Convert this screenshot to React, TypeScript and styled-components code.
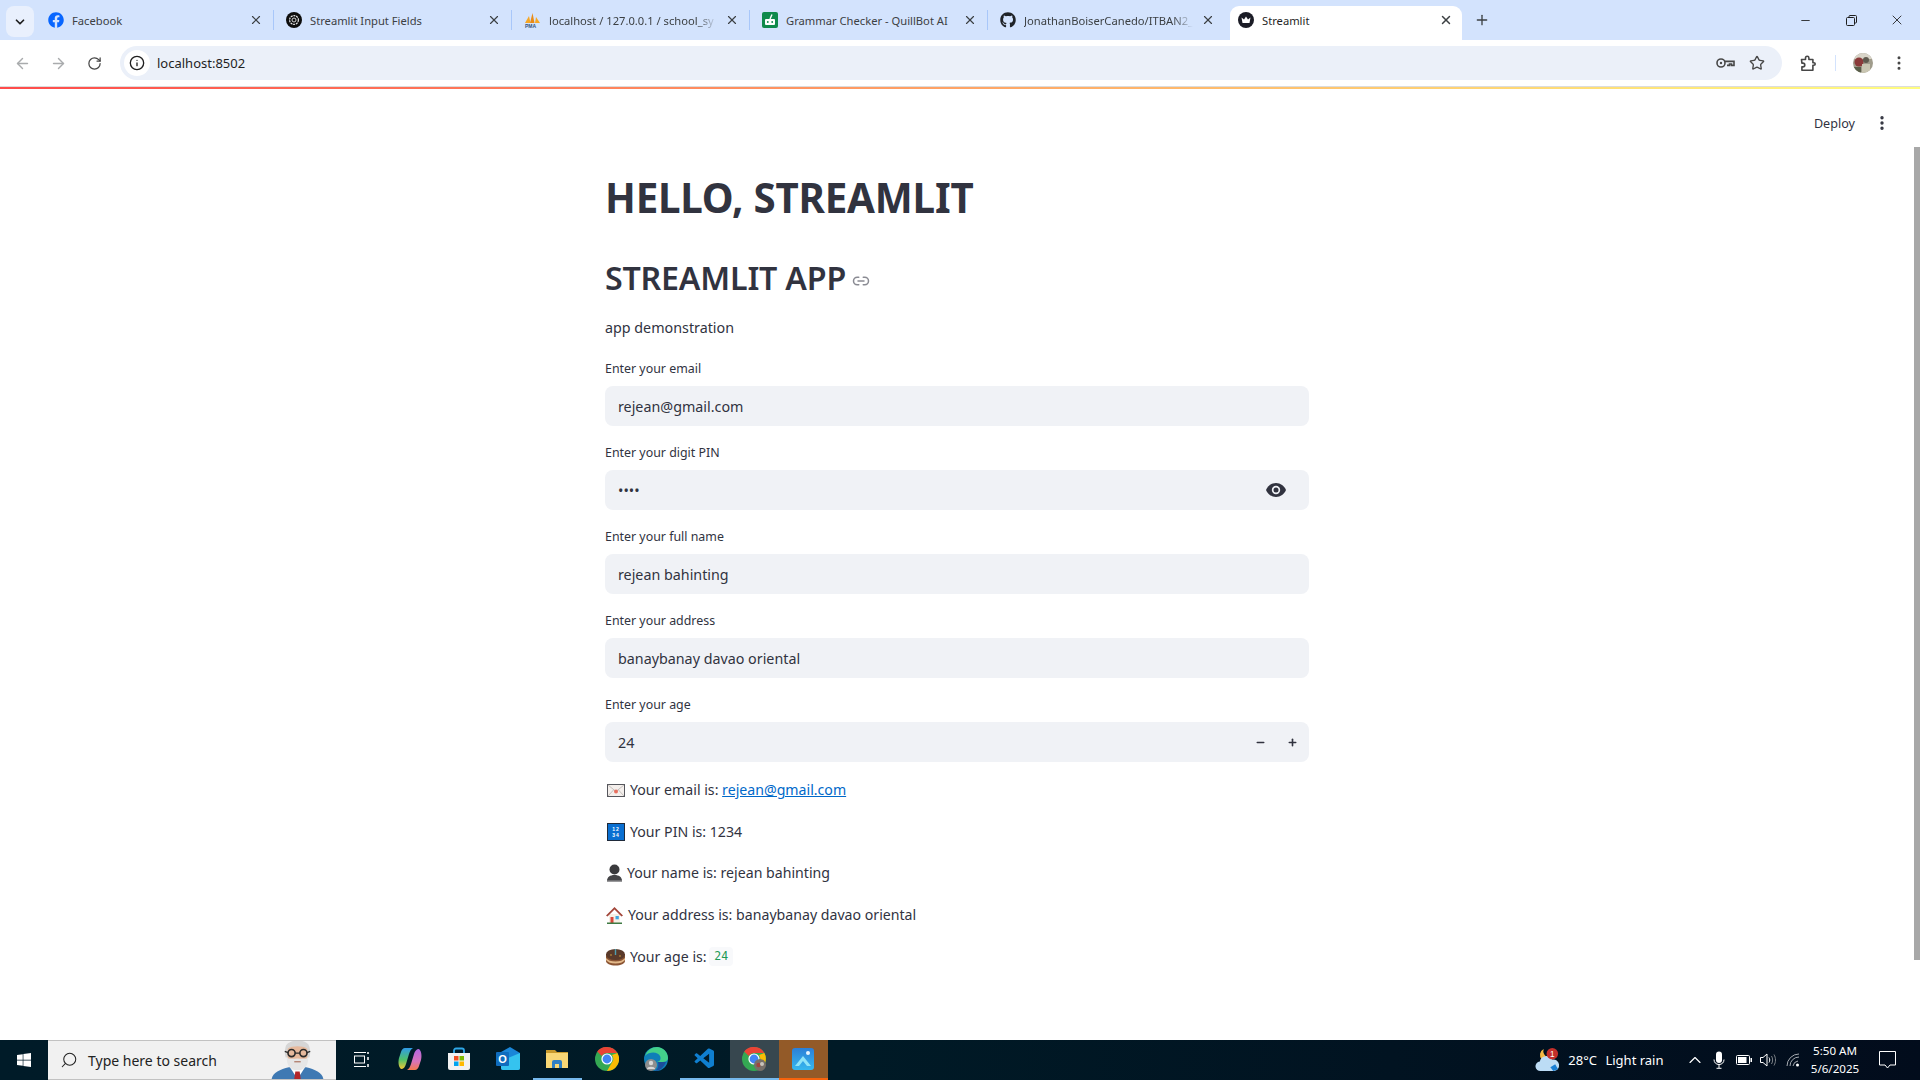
import styled, { createGlobalStyle } from 'styled-components';
import {
  ArrowLeft,
  ArrowRight,
  ChevronDown,
  ChevronUp,
  EllipsisVertical,
  Info,
  Link2,
  Minus,
  Plus,
  RotateCw,
  Search,
  Star,
  X,
} from 'lucide-react';
import { FaFacebook, FaGithub, FaWindows } from 'react-icons/fa';
import { VscVscode } from 'react-icons/vsc';

const UI_FONT = '"Noto Sans", "Open Sans", sans-serif';

const GlobalStyle = createGlobalStyle`
  html, body {
    margin: 0;
    padding: 0;
    height: 100%;
    overflow: hidden;
    background: #ffffff;
    font-family: ${UI_FONT};
  }
  * { box-sizing: border-box; }
`;

const Page = styled.div`
  width: 1920px;
  height: 1080px;
  display: flex;
  flex-direction: column;
  overflow: hidden;
`;

/* ---- browser tabs ---- */

const TabStrip = styled.div`
  height: 40px;
  flex: none;
  display: flex;
  align-items: flex-end;
  padding-left: 6px;
  background: #d3e3fd;
`;

const TabMenu = styled.div`
  width: 28px;
  height: 31px;
  margin: 6px 2px 0 0;
  align-self: flex-start;
  border-radius: 8px;
  display: flex;
  align-items: center;
  justify-content: center;
  background: #e9f0fd;
  color: #1f1f1f;
`;

const Tab = styled.div<{ $active?: boolean; $noSep?: boolean }>`
  position: relative;
  width: 238px;
  height: 40px;
  padding: 0 11px 0 12px;
  display: flex;
  align-items: center;
  gap: 8px;
  font-size: 11.2px;
  color: ${(p) => (p.$active ? '#1f1f1f' : '#3c4043')};

  &::before {
    content: '';
    display: ${(p) => (p.$active ? 'block' : 'none')};
    position: absolute;
    left: 4px;
    right: 2px;
    top: 6px;
    bottom: 0;
    background: #ffffff;
    border-radius: 9px 9px 0 0;
  }

  &::after {
    content: '';
    display: ${(p) => (p.$active || p.$noSep ? 'none' : 'block')};
    position: absolute;
    right: 0;
    top: 10px;
    height: 20px;
    width: 1px;
    background: #a8c7fa;
  }

  > * {
    position: relative;
  }
`;

const TabTitle = styled.span<{ $fade?: boolean }>`
  flex: 1;
  min-width: 0;
  white-space: nowrap;
  overflow: hidden;
  ${(p) =>
    p.$fade
      ? 'mask-image: linear-gradient(to right, #000 88%, transparent 100%);'
      : ''}
`;

const TabClose = styled.span`
  width: 14px;
  flex: none;
  display: flex;
  justify-content: center;
  color: #3c4043;
`;

const NewTab = styled.div`
  width: 36px;
  height: 40px;
  display: flex;
  align-items: center;
  justify-content: center;
  color: #3c4043;
`;

const WindowButtons = styled.div`
  margin-left: auto;
  height: 40px;
  display: flex;
  align-items: center;
  color: #1f1f1f;
`;

const WindowButton = styled.div`
  width: 46px;
  height: 40px;
  display: flex;
  align-items: center;
  justify-content: center;
`;

/* ---- browser toolbar ---- */

const Toolbar = styled.div`
  height: 47px;
  flex: none;
  padding: 6px 10px 6px 4px;
  display: flex;
  align-items: flex-start;
  background: #ffffff;
  border-bottom: 1px solid #dcdcdc;
`;

const NavButton = styled.div<{ $dim?: boolean }>`
  width: 36px;
  height: 34px;
  display: flex;
  align-items: center;
  justify-content: center;
  color: ${(p) => (p.$dim ? '#a9abad' : '#474747')};
`;

const UrlBar = styled.div`
  width: 1662px;
  height: 34px;
  margin-left: 8px;
  padding: 0 17px 0 4px;
  border-radius: 17px;
  display: flex;
  align-items: center;
  background: #ebf0f9;
  font-size: 13px;
  color: #1f1f1f;
`;

const InfoBadge = styled.div`
  width: 26px;
  height: 26px;
  margin-right: 7px;
  border-radius: 50%;
  display: flex;
  align-items: center;
  justify-content: center;
  background: #ffffff;
  color: #1f1f1f;
`;

const UrlActions = styled.div`
  margin-left: auto;
  display: flex;
  align-items: center;
  gap: 14px;
  color: #474747;
`;

const ToolbarRight = styled.div`
  flex: 1;
  height: 34px;
  display: flex;
  align-items: center;
  padding-left: 18px;
  color: #474747;
`;

const ToolbarSep = styled.div`
  width: 1px;
  height: 16px;
  margin: 0 17px 0 18px;
  background: #d3e3fd;
`;

const ToolbarMenu = styled.span`
  margin-left: 17px;
  display: flex;
`;

/* ---- streamlit page ---- */

const Decoration = styled.div`
  height: 2px;
  flex: none;
  background: linear-gradient(to right, #ff4b4b, #fffd80);
`;

const Body = styled.div`
  flex: 1;
  min-height: 0;
  display: flex;
  background: #ffffff;
`;

const Main = styled.main`
  flex: 1;
  min-width: 0;
  display: flex;
  flex-direction: column;
`;

const Scrollbar = styled.div`
  width: 8px;
  padding: 58px 0 0 2px;
`;

const ScrollThumb = styled.div`
  height: 813px;
  background: #a8a8a8;
`;

const StreamlitHeader = styled.header`
  height: 68px;
  flex: none;
  padding-right: 21px;
  display: flex;
  align-items: center;
  justify-content: flex-end;
  gap: 18px;
  font-size: 12.6px;
  color: #31333f;
`;

const Content = styled.div`
  width: 704px;
  margin-left: 605px;
  padding-top: 16px;
  color: #31333f;
`;

const Title = styled.h1`
  margin: 0;
  height: 56px;
  font-size: 40.3px;
  font-weight: 700;
  line-height: 50px;
  letter-spacing: -0.2px;
`;

const Subtitle = styled.h2`
  margin: 27px 0 0;
  height: 44px;
  display: flex;
  align-items: center;
  gap: 6px;
  font-size: 32.2px;
  font-weight: 600;
  line-height: 44px;
  letter-spacing: -0.2px;
`;

const LinkIcon = styled.span`
  display: flex;
  margin-top: 6px;
  color: #8a8b93;
`;

const Intro = styled.p`
  margin: 16px 0 0;
  height: 24px;
  font-size: 14.3px;
  line-height: 24px;
`;

const FieldList = styled.div`
  margin-top: 18px;
  display: flex;
  flex-direction: column;
  gap: 16px;
`;

const Field = styled.div`
  display: flex;
  flex-direction: column;
`;

const FieldLabel = styled.label`
  height: 28px;
  font-size: 12.4px;
  line-height: 22px;
`;

const InputBox = styled.div`
  height: 40px;
  padding: 0 13px;
  border-radius: 8px;
  display: flex;
  align-items: center;
  background: #f0f2f6;
  font-size: 14.3px;
  color: #31333f;
`;

const InputValue = styled.span`
  flex: 1;
`;

const EyeButton = styled.span`
  margin-right: 10px;
  display: flex;
`;

const Stepper = styled.span`
  display: flex;
  align-items: center;
  gap: 21px;
  margin-right: -2px;
  color: #31333f;
`;

const Results = styled.div`
  margin-top: 16px;
  display: flex;
  flex-direction: column;
  gap: 17.7px;
`;

const ResultLine = styled.p`
  margin: 0;
  height: 24px;
  display: flex;
  align-items: center;
  gap: 5px;
  font-size: 14.15px;
  line-height: 24px;
`;

const Emoji = styled.span<{ $left: number }>`
  display: flex;
  margin-left: ${(p) => p.$left}px;
`;

const LineText = styled.span`
  display: inline-flex;
  align-items: center;
  white-space: pre;
`;

const Mail = styled.a`
  color: #0068c9;
  text-decoration: underline;
`;

const CodeBadge = styled.code`
  margin-left: -1px;
  padding: 1px 5px;
  border-radius: 4px;
  background: #f8f9fb;
  font-family: "DejaVu Sans Mono", monospace;
  font-size: 11.5px;
  line-height: 17px;
  color: #1c9a56;
`;

/* ---- windows taskbar ---- */

const Taskbar = styled.footer`
  height: 40px;
  flex: none;
  display: flex;
  align-items: stretch;
  background: linear-gradient(to right, #001b28, #001a26 45%, #020c1c);
  color: #ffffff;
`;

const StartButton = styled.div`
  width: 48px;
  display: flex;
  align-items: center;
  justify-content: center;
`;

const SearchBox = styled.div`
  position: relative;
  width: 288px;
  padding-left: 12px;
  display: flex;
  align-items: center;
  gap: 10px;
  overflow: hidden;
  background: #f1f1f1;
  border-top: 1px solid #c2c2c2;
  border-bottom: 1px solid #c2c2c2;
  font-size: 14px;
  color: #222222;
`;

const SearchGlass = styled(Search)`
  transform: scaleX(-1);
`;

const SearchMan = styled.span`
  position: absolute;
  right: 10px;
  bottom: 0;
  display: flex;
`;

const TaskSlot = styled.div<{ $state?: 'open' | 'active' | 'alert' }>`
  width: 49.2px;
  display: flex;
  align-items: center;
  justify-content: center;
  border-bottom: 2px solid
    ${(p) =>
      p.$state === 'alert' ? '#f7630c' : p.$state ? '#76b9ed' : 'transparent'};
  background: ${(p) =>
    p.$state === 'active' ? '#37474f' : p.$state === 'alert' ? '#935a28' : 'transparent'};
`;

const Tray = styled.div`
  margin-left: auto;
  padding-right: 11px;
  display: flex;
  align-items: center;
  font-size: 13px;
`;

const WeatherText = styled.span`
  margin-left: 8.5px;
  font-size: 13px;
`;

const TrayIcons = styled.div`
  margin-left: 19px;
  display: flex;
  align-items: center;
`;

const TraySlot = styled.span`
  width: 24.5px;
  display: flex;
  justify-content: center;
`;

const Clock = styled.div`
  width: 60px;
  display: flex;
  flex-direction: column;
  align-items: center;
  font-size: 11.6px;
  line-height: 18px;
`;

const Notify = styled.div`
  width: 44px;
  display: flex;
  align-items: center;
  justify-content: center;
`;

/* ---- drawings ---- */

const ChromeLogo = ({ size = 24 }: { size?: number }) => (
  <svg width={size} height={size} viewBox="0 0 24 24">
    <circle cx="12" cy="12" r="12" fill="#34a853" />
    <path d="M12 0a12 12 0 0 1 10.4 6H12a6 6 0 0 0-5.2 3L2.2 4.4A12 12 0 0 1 12 0z" fill="#ea4335" />
    <path d="M22.4 6A12 12 0 0 1 12 24l5.2-9A6 6 0 0 0 16.9 8z" fill="#fbbc04" />
    <circle cx="12" cy="12" r="5.6" fill="#ffffff" />
    <circle cx="12" cy="12" r="4.4" fill="#4285f4" />
  </svg>
);

const ProfilePhoto = () => (
  <svg width="20" height="20" viewBox="0 0 20 20">
    <clipPath id="avatar-clip">
      <circle cx="10" cy="10" r="10" />
    </clipPath>
    <g clipPath="url(#avatar-clip)">
      <rect width="20" height="20" fill="#a09c8c" />
      <rect width="20" height="6" fill="#d8d4c8" />
      <circle cx="6" cy="9" r="4.500" fill="#8b3a3a" />
      <circle cx="13" cy="7" r="3" fill="#5e5a4e" />
      <rect x="9" y="11" width="8" height="9" fill="#c9c6b2" />
      <rect x="1" y="14" width="7" height="6" fill="#5a5f4a" />
    </g>
  </svg>
);

const StreamlitFavicon = () => (
  <svg width="16" height="16" viewBox="0 0 16 16">
    <circle cx="8" cy="8" r="8" fill="#1b1c26" />
    <path d="M3.5 5.5 6 7.5 8 4.5l2 3 2.5-2-1 5.5h-7z" fill="#ffffff" />
  </svg>
);

const OpenAiFavicon = () => (
  <svg width="16" height="16" viewBox="0 0 16 16">
    <circle cx="8" cy="8" r="8" fill="#0d0d0d" />
    <circle cx="8" cy="8" r="4.4" fill="none" stroke="#e8e8e8" strokeWidth="1.2" strokeDasharray="2 0.8" />
    <circle cx="8" cy="8" r="2" fill="none" stroke="#e8e8e8" strokeWidth="0.9" />
  </svg>
);

const PmaFavicon = () => (
  <svg width="17" height="16" viewBox="0 0 17 16">
    <path d="M1 11 5 4l1.5 7z" fill="#f6a623" />
    <path d="M6 11 8.5 1l2 10z" fill="#e98b16" />
    <path d="M11 11 12 5l4 6z" fill="#f6a623" />
    <text x="1" y="15.5" fontFamily="Liberation Sans" fontSize="5" fontWeight="700" fill="#33557f">PMA</text>
  </svg>
);

const QuillFavicon = () => (
  <svg width="16" height="16" viewBox="0 0 16 16">
    <rect width="16" height="16" rx="2" fill="#0f8a4c" />
    <rect x="3" y="7" width="10" height="6" rx="1" fill="#ffffff" />
    <path d="M8 7 10 2.5" stroke="#ffffff" strokeWidth="1.4" />
    <circle cx="5.8" cy="10" r="0.9" fill="#0f8a4c" />
    <circle cx="10.2" cy="10" r="0.9" fill="#0f8a4c" />
  </svg>
);

const KeyIcon = () => (
  <svg width="19" height="12" viewBox="0 0 19 12" fill="none" stroke="#474747" strokeWidth="1.6">
    <circle cx="5" cy="6" r="4" />
    <circle cx="5" cy="6" r="1.2" fill="#474747" stroke="none" />
    <path d="M9 4.4h9v4h-2.5V7h-2v1.4H11" />
  </svg>
);

const PuzzleIcon = () => (
  <svg width="17" height="17" viewBox="0 0 17 17" fill="none" stroke="#474747" strokeWidth="1.6">
    <path d="M1.5 4.5h4V3a1.7 1.7 0 0 1 3.4 0v1.5h4v3.2h1a1.3 1.3 0 0 1 0 2.6h-1v5h-11v-3.4h1a1.9 1.9 0 0 0 0-3.8h-1z" strokeLinejoin="round" />
  </svg>
);

const RestoreIcon = () => (
  <svg width="11" height="11" viewBox="0 0 11 11" fill="none" stroke="#1f1f1f">
    <rect x="0.5" y="2.5" width="8" height="8" rx="1" />
    <path d="M3 2.5V1.5a1 1 0 0 1 1-1h5.5a1 1 0 0 1 1 1V7a1 1 0 0 1-1 1h-1" />
  </svg>
);

const EyeIcon = () => (
  <svg width="20" height="14" viewBox="0 0 20 14">
    <path d="M10 0C5.500 0 1.700 2.900 0 7c1.700 4.100 5.500 7 10 7s8.300-2.900 10-7c-1.700-4.100-5.500-7-10-7z" fill="#31333f" />
    <circle cx="10" cy="7" r="4.200" fill="#f0f2f6" />
    <circle cx="10" cy="7" r="2.500" fill="#31333f" />
  </svg>
);

const EnvelopeEmoji = () => (
  <svg width="18" height="13" viewBox="0 0 18 13">
    <rect x="0.500" y="0.500" width="17" height="12" fill="#f4efec" stroke="#55565c" />
    <path d="M1 1l8 6.500L17 1M1 12l5.500-6M17 12l-5.500-6" fill="none" stroke="#c4c0bd" />
    <circle cx="9" cy="7.500" r="2" fill="#e8705f" />
  </svg>
);

const KeypadEmoji = () => (
  <svg width="18" height="18" viewBox="0 0 18 18">
    <rect x="0.500" y="0.500" width="17" height="17" fill="#0a6fd1" stroke="#1f2a3a" />
    <text x="9" y="8" textAnchor="middle" fontFamily="Liberation Sans" fontSize="5" fontWeight="700" fill="#ffffff" letterSpacing="1">12</text>
    <text x="9" y="14" textAnchor="middle" fontFamily="Liberation Sans" fontSize="5" fontWeight="700" fill="#ffffff" letterSpacing="1">34</text>
  </svg>
);

const BustEmoji = () => (
  <svg width="15" height="18" viewBox="0 0 15 18">
    <circle cx="7.500" cy="5.500" r="5" fill="#3a3a3d" />
    <path d="M0 17c0-4 3-6 7.500-6s7.500 2 7.500 6z" fill="#454548" />
    <rect y="16.500" width="15" height="1.500" fill="#9a9a9c" />
  </svg>
);

const HouseEmoji = () => (
  <svg width="17" height="18" viewBox="0 0 17 18">
    <path d="M3 8h11v9H3z" fill="#f6efe4" />
    <path d="M0 9.500 8.500 1 17 9.500 15.500 10.500 8.500 3.500 1.500 10.500z" fill="#a2463a" />
    <rect x="4.500" y="11" width="3" height="6" fill="#d8463a" />
    <rect x="9.500" y="10" width="3.300" height="3.300" fill="#3fa7e0" />
    <rect x="1" y="16.500" width="15" height="1.500" fill="#3e7a43" />
  </svg>
);

const CakeEmoji = () => (
  <svg width="19" height="18" viewBox="0 0 19 18">
    <path d="M0 6h19v7c0 2.500-4.200 4.500-9.500 4.500S0 15.500 0 13z" fill="#8a5433" />
    <path d="M0 10c2 2.500 5 3.500 9.500 3.500S17 12.500 19 10v2c-2 2.500-5 3.500-9.500 3.500S2 14.500 0 12z" fill="#e3b98a" />
    <ellipse cx="9.500" cy="6.500" rx="9.500" ry="5.500" fill="#5a3a2a" />
    <rect x="8.800" y="1" width="1.400" height="6" fill="#4f9fb0" />
    <circle cx="5" cy="7" r="0.800" fill="#d9a441" />
    <circle cx="14" cy="8" r="0.800" fill="#d9a441" />
  </svg>
);

const SearchManIcon = () => (
  <svg width="57" height="41" viewBox="0 0 52 38">
    <path d="M2 38c1-6 8-9 16-11h16c8 2 15 5 16 11z" fill="#3f79b3" />
    <path d="M19 27l7 11 7-11z" fill="#ffffff" />
    <path d="M24 31h4l1 7h-6z" fill="#b3262a" />
    <path d="M15 8c2-7 20-8 22 0 1 4 1 7 0 10H15c-1-3-1-6 0-10z" fill="#d6d6d6" />
    <path d="M17 10c4-3 14-3 18 0 1 6 0 12-3 15H20c-3-3-4-9-3-15z" fill="#e6b99c" />
    <path d="M16 18c2 2 6 1 10 1s8 1 10-1c0 7-3 12-10 12s-10-5-10-12z" fill="#e6e6e6" />
    <path d="M23 22h6" stroke="#b07c6a" strokeWidth="1.200" />
    <circle cx="20.500" cy="14" r="3.300" fill="none" stroke="#2a2a2a" strokeWidth="1.500" />
    <circle cx="31.500" cy="14" r="3.300" fill="none" stroke="#2a2a2a" strokeWidth="1.500" />
    <path d="M23.800 14h4.400M17.200 13.500l-3-1M34.800 13.500l3-1" stroke="#2a2a2a" strokeWidth="1.200" />
  </svg>
);

const TaskViewIcon = () => (
  <svg width="16" height="17" viewBox="0 0 16 17" fill="none" stroke="#ffffff">
    <path d="M1 1.500h12M1 15.500h12" />
    <rect x="1.500" y="5" width="10" height="7" />
    <path d="M15 1v2M15 6v3M15 13v3" strokeWidth="1.500" />
  </svg>
);

const CopilotIcon = () => (
  <svg width="24" height="24" viewBox="0 0 24 24">
    <defs>
      <linearGradient id="copilot-a" x1="0" y1="0" x2="0" y2="1">
        <stop offset="0" stopColor="#2f9be8" />
        <stop offset="0.550" stopColor="#4fc06a" />
        <stop offset="1" stopColor="#f3c534" />
      </linearGradient>
      <linearGradient id="copilot-b" x1="0" y1="0" x2="0" y2="1">
        <stop offset="0" stopColor="#b266e0" />
        <stop offset="0.600" stopColor="#d874b8" />
        <stop offset="1" stopColor="#f47a4d" />
      </linearGradient>
    </defs>
    <path d="M7 1h8c-2 1-3 3-4 6l-3 10c-.8 3-2.500 5-5 5C.5 20 0 15 1 11l2-6c.6-2 2-4 4-4z" fill="url(#copilot-a)" />
    <path d="M17 23H9c2-1 3-3 4-6l3-10c.8-3 2.500-5 5-5 2.500 2 3 7 2 11l-2 6c-.6 2-2 4-4 4z" fill="url(#copilot-b)" />
  </svg>
);

const StoreIcon = () => (
  <svg width="24" height="24" viewBox="0 0 24 24">
    <path d="M7 6V3.500A2 2 0 0 1 9 1.500h6a2 2 0 0 1 2 2V6" fill="none" stroke="#2ea8e8" strokeWidth="1.800" />
    <path d="M1 6h22v15a2 2 0 0 1-2 2H3a2 2 0 0 1-2-2z" fill="#f2f2f2" />
    <rect x="7" y="9" width="4.500" height="4.500" fill="#f25022" />
    <rect x="12.500" y="9" width="4.500" height="4.500" fill="#7fba00" />
    <rect x="7" y="14.500" width="4.500" height="4.500" fill="#00a4ef" />
    <rect x="12.500" y="14.500" width="4.500" height="4.500" fill="#ffb900" />
  </svg>
);

const OutlookIcon = () => (
  <svg width="25" height="24" viewBox="0 0 25 24">
    <path d="M5 5 14 0l10 6v15a2 2 0 0 1-2 2H7a2 2 0 0 1-2-2z" fill="#1a86d8" />
    <path d="M5 14l19-8v15a2 2 0 0 1-2 2H7a2 2 0 0 1-2-2z" fill="#35c3ef" />
    <rect x="0" y="5" width="13" height="14" rx="1" fill="#0f6cbd" />
    <text x="6.500" y="16" textAnchor="middle" fontFamily="Liberation Sans" fontSize="11" fontWeight="700" fill="#ffffff">O</text>
  </svg>
);

const FilesIcon = () => (
  <svg width="22" height="20" viewBox="0 0 22 20">
    <path d="M0 1h9l2 2h11v16H0z" fill="#c89a2c" />
    <rect y="4" width="22" height="15" fill="#f8d775" />
    <path d="M6 19v-6a2 2 0 0 1 2-2h6a2 2 0 0 1 2 2v6h-3v-4H9v4z" fill="#2f7fc4" />
  </svg>
);

const EdgeIcon = () => (
  <svg width="24" height="24" viewBox="0 0 24 24">
    <circle cx="12" cy="12" r="12" fill="#0f7fb8" />
    <path d="M1 9C3 3 8 0 13 0c6 0 11 5 11 11 0 3-3 4-6 4h-5c4-1 4-4 3-6C14 5 6 4 1 9z" fill="#43d08a" />
    <path d="M14 15h8c-2 5-6 9-11 9 3-2 4-5 3-9z" fill="#1b4d9c" />
    <circle cx="7" cy="18" r="6" fill="#8e8e8e" />
    <circle cx="7" cy="16" r="2.200" fill="#d8d8d8" />
    <path d="M3 22c0-3 8-3 8 0z" fill="#d8d8d8" />
  </svg>
);

const ActiveChrome = () => (
  <svg width="24" height="24" viewBox="0 0 24 24">
    <circle cx="12" cy="12" r="12" fill="#34a853" />
    <path d="M12 0a12 12 0 0 1 10.400 6H12a6 6 0 0 0-5.200 3L2.200 4.400A12 12 0 0 1 12 0z" fill="#ea4335" />
    <path d="M22.400 6A12 12 0 0 1 18 22l-.8-7a6 6 0 0 0-.3-7z" fill="#fbbc04" />
    <circle cx="12" cy="12" r="5.600" fill="#ffffff" />
    <circle cx="12" cy="12" r="4.400" fill="#4285f4" />
    <circle cx="18" cy="18" r="6" fill="#77706a" />
    <circle cx="16.500" cy="18" r="2.200" fill="#a1443f" />
    <circle cx="20" cy="17" r="2" fill="#c8c4bb" />
  </svg>
);

const PhotosIcon = () => (
  <svg width="22" height="22" viewBox="0 0 22 22">
    <defs>
      <linearGradient id="photos-a" x1="0" y1="0" x2="0" y2="1">
        <stop offset="0" stopColor="#2b7fd8" />
        <stop offset="1" stopColor="#37b8ee" />
      </linearGradient>
    </defs>
    <rect width="22" height="22" rx="3" fill="url(#photos-a)" />
    <circle cx="16" cy="5" r="2" fill="#e9f5ff" />
    <path d="M3 18 11 8l8 10h-4l-4-5-4 5z" fill="#8ee4f8" />
  </svg>
);

const WeatherIcon = () => (
  <svg width="25" height="25" viewBox="0 0 26 26">
    <path d="M9 1a7 7 0 0 0 5 9l-7 2A7 7 0 0 1 9 1z" fill="#f5b942" />
    <path d="M6 24a5 5 0 0 1-1-10 7 7 0 0 1 13-2 6 6 0 0 1 2 12z" fill="#bcdcf5" />
    <path d="M19 24l-3-4 5-3 3 5z" fill="#1a7fd4" />
    <circle cx="18" cy="6" r="6" fill="#c4302b" />
    <text x="18" y="9" textAnchor="middle" fontFamily="Liberation Sans" fontSize="8.500" fill="#ffffff">1</text>
  </svg>
);

const MicIcon = () => (
  <svg width="12" height="18" viewBox="0 0 12 18">
    <rect x="3" y="0.500" width="6" height="11.500" rx="3" fill="#ffffff" />
    <path d="M1 8.500c0 3 2 5 5 5s5-2 5-5M6 13.500V17M3.500 17.300h5" fill="none" stroke="#ffffff" />
  </svg>
);

const BatteryIcon = () => (
  <svg width="16" height="10" viewBox="0 0 16 10">
    <rect x="0.500" y="0.500" width="13" height="9" rx="1" fill="none" stroke="#ffffff" />
    <rect x="2" y="2" width="8.500" height="6" fill="#ffffff" />
    <rect x="14.500" y="3" width="1.500" height="4" fill="#ffffff" />
  </svg>
);

const SpeakerIcon = () => (
  <svg width="16" height="14" viewBox="0 0 16 14" fill="none" stroke="#ffffff">
    <path d="M0.500 4.500h2.500L7 1v12L3 9.500H0.500z" />
    <path d="M9 4.500c1 1.500 1 3.500 0 5" />
    <path d="M11.500 3c1.500 2.500 1.500 5.500 0 8M14 1.500c2 3.500 2 7.500 0 11" stroke="#7d8288" />
  </svg>
);

const WifiIcon = () => (
  <svg width="14" height="14" viewBox="0 0 14 14" fill="none" stroke="#b8bcc2" strokeWidth="0.900">
    <path d="M1 13A12 12 0 0 1 13 1M4 13a9 9 0 0 1 9-9M7 13a6 6 0 0 1 5-5" />
    <circle cx="11.500" cy="12" r="1.500" fill="#ffffff" stroke="none" />
  </svg>
);

const NotifyIcon = () => (
  <svg width="17" height="18" viewBox="0 0 17 18" fill="none" stroke="#ffffff">
    <path d="M0.500 0.500h16v13.500h-5.500L8.500 17 6 14H0.500z" />
  </svg>
);

const FIELDS = [
  { label: 'Enter your email', value: 'rejean@gmail.com' },
  { label: 'Enter your digit PIN', value: '••••', kind: 'password' },
  { label: 'Enter your full name', value: 'rejean bahinting' },
  { label: 'Enter your address', value: 'banaybanay davao oriental' },
  { label: 'Enter your age', value: '24', kind: 'number' },
];

export default function App() {
  return (
    <Page>
      <GlobalStyle />
      <TabStrip>
        <TabMenu>
          <ChevronDown size={14} strokeWidth={3} />
        </TabMenu>
        <Tab>
          <FaFacebook size={16} color="#0866ff" />
          <TabTitle>Facebook</TabTitle>
          <TabClose><X size={14} /></TabClose>
        </Tab>
        <Tab>
          <OpenAiFavicon />
          <TabTitle>Streamlit Input Fields</TabTitle>
          <TabClose><X size={14} /></TabClose>
        </Tab>
        <Tab>
          <PmaFavicon />
          <TabTitle $fade>localhost / 127.0.0.1 / school_sy</TabTitle>
          <TabClose><X size={14} /></TabClose>
        </Tab>
        <Tab>
          <QuillFavicon />
          <TabTitle>Grammar Checker - QuillBot AI</TabTitle>
          <TabClose><X size={14} /></TabClose>
        </Tab>
        <Tab $noSep>
          <FaGithub size={16} color="#1f2328" />
          <TabTitle $fade>JonathanBoiserCanedo/ITBAN2_</TabTitle>
          <TabClose><X size={14} /></TabClose>
        </Tab>
        <Tab $active>
          <StreamlitFavicon />
          <TabTitle>Streamlit</TabTitle>
          <TabClose><X size={14} strokeWidth={2.5} /></TabClose>
        </Tab>
        <NewTab>
          <Plus size={16} strokeWidth={2} />
        </NewTab>
        <WindowButtons>
          <WindowButton><Minus size={13} strokeWidth={1.6} /></WindowButton>
          <WindowButton><RestoreIcon /></WindowButton>
          <WindowButton><X size={16} strokeWidth={1.3} /></WindowButton>
        </WindowButtons>
      </TabStrip>

      <Toolbar>
        <NavButton $dim><ArrowLeft size={17} /></NavButton>
        <NavButton $dim><ArrowRight size={17} /></NavButton>
        <NavButton><RotateCw size={15} /></NavButton>
        <UrlBar>
          <InfoBadge><Info size={16} /></InfoBadge>
          localhost:8502
          <UrlActions>
            <KeyIcon />
            <Star size={16} strokeWidth={2} />
          </UrlActions>
        </UrlBar>
        <ToolbarRight>
          <PuzzleIcon />
          <ToolbarSep />
          <ProfilePhoto />
          <ToolbarMenu><EllipsisVertical size={18} /></ToolbarMenu>
        </ToolbarRight>
      </Toolbar>
      <Decoration />

      <Body>
        <Main>
          <StreamlitHeader>
            Deploy
            <EllipsisVertical size={18} strokeWidth={2.5} />
          </StreamlitHeader>
          <Content>
            <Title>HELLO, STREAMLIT</Title>
            <Subtitle>
              STREAMLIT APP
              <LinkIcon><Link2 size={18} /></LinkIcon>
            </Subtitle>
            <Intro>app demonstration</Intro>
            <FieldList>
              {FIELDS.map((field) => (
                <Field key={field.label}>
                  <FieldLabel>{field.label}</FieldLabel>
                  <InputBox>
                    <InputValue>{field.value}</InputValue>
                    {field.kind === 'password' && (
                      <EyeButton><EyeIcon /></EyeButton>
                    )}
                    {field.kind === 'number' && (
                      <Stepper>
                        <Minus size={11} strokeWidth={3.5} />
                        <Plus size={11} strokeWidth={3.5} />
                      </Stepper>
                    )}
                  </InputBox>
                </Field>
              ))}
            </FieldList>
            <Results>
              <ResultLine>
                <Emoji $left={2}><EnvelopeEmoji /></Emoji>
                <LineText>Your email is: <Mail href="#">rejean@gmail.com</Mail></LineText>
              </ResultLine>
              <ResultLine>
                <Emoji $left={2}><KeypadEmoji /></Emoji>
                <LineText>Your PIN is: 1234</LineText>
              </ResultLine>
              <ResultLine>
                <Emoji $left={2}><BustEmoji /></Emoji>
                <LineText>Your name is: rejean bahinting</LineText>
              </ResultLine>
              <ResultLine>
                <Emoji $left={1}><HouseEmoji /></Emoji>
                <LineText>Your address is: banaybanay davao oriental</LineText>
              </ResultLine>
              <ResultLine>
                <Emoji $left={1}><CakeEmoji /></Emoji>
                <LineText>Your age is: <CodeBadge>24</CodeBadge></LineText>
              </ResultLine>
            </Results>
          </Content>
        </Main>
        <Scrollbar>
          <ScrollThumb />
        </Scrollbar>
      </Body>

      <Taskbar>
        <StartButton><FaWindows size={16} /></StartButton>
        <SearchBox>
          <SearchGlass size={18} strokeWidth={1.4} />
          Type here to search
          <SearchMan><SearchManIcon /></SearchMan>
        </SearchBox>
        <TaskSlot><TaskViewIcon /></TaskSlot>
        <TaskSlot><CopilotIcon /></TaskSlot>
        <TaskSlot><StoreIcon /></TaskSlot>
        <TaskSlot><OutlookIcon /></TaskSlot>
        <TaskSlot $state="open"><FilesIcon /></TaskSlot>
        <TaskSlot><ChromeLogo /></TaskSlot>
        <TaskSlot><EdgeIcon /></TaskSlot>
        <TaskSlot $state="open"><VscVscode size={24} color="#0f7fd0" /></TaskSlot>
        <TaskSlot $state="active"><ActiveChrome /></TaskSlot>
        <TaskSlot $state="alert"><PhotosIcon /></TaskSlot>
        <Tray>
          <WeatherIcon />
          <WeatherText>28°C</WeatherText>
          <WeatherText>Light rain</WeatherText>
          <TrayIcons>
            <TraySlot><ChevronUp size={20} strokeWidth={1.4} /></TraySlot>
            <TraySlot><MicIcon /></TraySlot>
            <TraySlot><BatteryIcon /></TraySlot>
            <TraySlot><SpeakerIcon /></TraySlot>
            <TraySlot><WifiIcon /></TraySlot>
          </TrayIcons>
          <Clock>
            <span>5:50 AM</span>
            <span>5/6/2025</span>
          </Clock>
          <Notify><NotifyIcon /></Notify>
        </Tray>
      </Taskbar>
    </Page>
  );
}
